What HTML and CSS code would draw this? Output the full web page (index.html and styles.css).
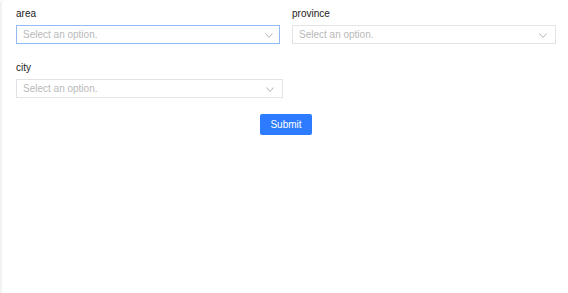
FILE: index.html
```html
<!DOCTYPE html>
<html lang="en">
<head>
  <meta charset="UTF-8" />
  <title>Form</title>
  <link rel="stylesheet" href="styles.css">
</head>
<body>
  <div class="panel">
    <form class="form" onsubmit="return false">
      <div class="grid">
        <div class="field">
          <label class="label">area</label>
          <div class="select focused">
            <span class="placeholder">Select an option.</span>
            <svg class="arrow" width="8" height="5" viewBox="0 0 8 5"><path d="M0.5 0.5l3.5 4 3.5-4" fill="none" stroke="#b5b5b5" stroke-width="1"/></svg>
          </div>
        </div>
        <div class="field">
          <label class="label">province</label>
          <div class="select">
            <span class="placeholder">Select an option.</span>
            <svg class="arrow" width="8" height="5" viewBox="0 0 8 5"><path d="M0.5 0.5l3.5 4 3.5-4" fill="none" stroke="#b5b5b5" stroke-width="1"/></svg>
          </div>
        </div>
        <div class="field">
          <label class="label">city</label>
          <div class="select">
            <span class="placeholder">Select an option.</span>
            <svg class="arrow" width="8" height="5" viewBox="0 0 8 5"><path d="M0.5 0.5l3.5 4 3.5-4" fill="none" stroke="#b5b5b5" stroke-width="1"/></svg>
          </div>
        </div>
      </div>
      <div class="actions">
        <button type="submit" class="btn">Submit</button>
      </div>
    </form>
  </div>
</body>
</html>
```

FILE: styles.css
```css
html, body {
  margin: 0;
  height: 100%;
  background: #fff;
}

body {
  font-family: "Liberation Sans", Arial, sans-serif;
  font-size: 10px;
  color: #222;
}

.panel {
  height: 100%;
  box-sizing: border-box;
  border-left: 2px solid #f2f2f2;
  border-top-left-radius: 4px;
  padding: 7px 12px 0 14px;
}

.grid {
  display: grid;
  grid-template-columns: 267px 264px;
  column-gap: 9px;
  row-gap: 17px;
}

.label {
  display: block;
  line-height: 13px;
  margin-bottom: 5px;
}

.select {
  height: 19px;
  box-sizing: border-box;
  border: 1px solid #e3e3e3;
  display: flex;
  align-items: center;
  justify-content: space-between;
  padding: 0 8px 0 6px;
}

.select.focused {
  width: 264px;
  border-color: #94bbf3;
  padding-right: 6px;
}

.placeholder {
  color: #b9b9b9;
}

.arrow {
  display: block;
  margin-top: 1px;
}

.actions {
  display: flex;
  justify-content: center;
  margin-top: 16px;
}

.btn {
  width: 52px;
  height: 21px;
  border: none;
  border-radius: 2px;
  background: #2d7bff;
  color: #fff;
  font-family: inherit;
  font-size: 10px;
  padding: 0;
  cursor: pointer;
}
```
